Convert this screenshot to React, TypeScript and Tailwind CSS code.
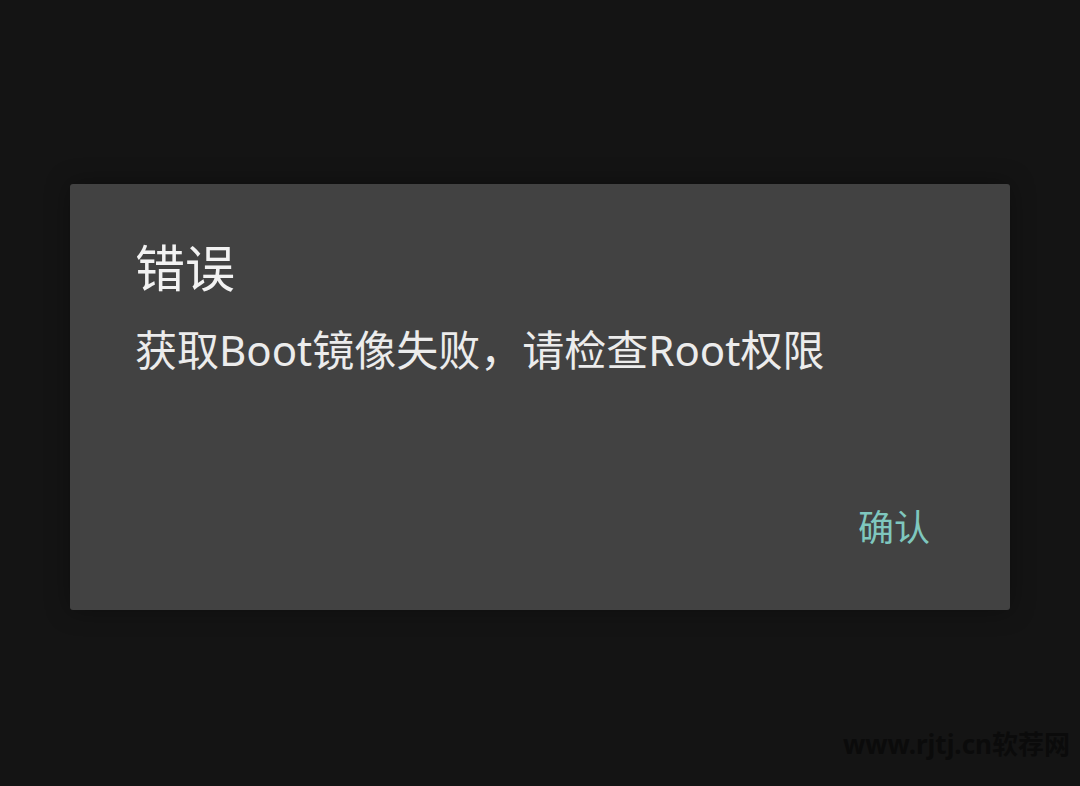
export default function App() {
  return (
    <main
      className="relative min-h-[786px] w-full bg-[#141414] pt-[184px]"
      style={{ fontFamily: '"Noto Sans", "Noto Sans CJK SC", sans-serif' }}
    >
      <div className="mx-auto flex h-[426px] w-[940px] flex-col rounded-[3px] bg-[#424242] pl-[65px] pr-[80px] pt-[59px] shadow-[0_0_24px_rgba(0,0,0,0.35)]">
        <h1 className="text-[50px] leading-none text-[#f2f2f2]">错误</h1>
        <p className="mt-[36px] text-[42px] leading-none text-[#ececec]">获取Boot镜像失败，请检查Root权限</p>
        <div className="mt-auto mb-[64px] flex justify-end">
          <button className="text-[36px] leading-none text-[#7fc7be]">确认</button>
        </div>
      </div>
      <div className="absolute bottom-[29px] right-[10px] text-[26px] font-bold leading-none text-[#0b0b0b]">
        www.rjtj.cn软荐网
      </div>
    </main>
  );
}
